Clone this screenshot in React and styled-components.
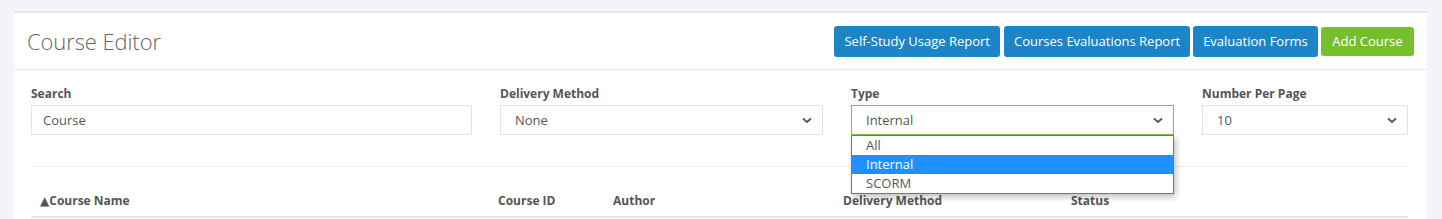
import React from "react";
import styled, { createGlobalStyle } from "styled-components";

const Global = createGlobalStyle`
  html, body { margin: 0; padding: 0; background: #f3f4f8; }
  body { font-family: "Open Sans", "Liberation Sans", sans-serif; color: #555; }
`;

const Page = styled.div`
  padding: 11px 15px 0 14px;
`;

const Card = styled.div`
  background: #fff;
  border-top: 2px solid #e4e7ea;
  height: 206px;
`;

const Header = styled.div`
  display: flex;
  align-items: center;
  justify-content: space-between;
  height: 56px;
  padding: 0 13px 0 13px;
  border-bottom: 1px solid #e8e8e8;
`;

const Title = styled.h1`
  margin: 0;
  font-size: 22px;
  font-weight: 300;
  color: #666;
  letter-spacing: -0.1px;
`;

const Actions = styled.div`
  display: flex;
  align-items: center;
  gap: 3px;
`;

const Button = styled.button`
  font-family: "Open Sans", "Liberation Sans", sans-serif;
  font-size: 13px;
  color: #fff;
  border: none;
  border-radius: 3px;
  height: ${(p) => (p.$green ? 29 : 31)}px;
  padding: 0 ${(p) => (p.$green ? 11.5 : 10)}px;
  margin-right: ${(p) => p.$mr || 0}px;
  background: ${(p) => (p.$green ? "#75bf2d" : "#1d84c6")};
  cursor: pointer;
`;

const Body = styled.div`
  padding: 16px 19px 0 17px;
`;

const Filters = styled.div`
  display: grid;
  grid-template-columns: 441px 323px 323px 206px;
  column-gap: 28px;
`;

const Field = styled.div`
  position: relative;
  display: flex;
  flex-direction: column;
`;

const Label = styled.label`
  font-size: 12px;
  font-weight: 700;
  color: #555;
  line-height: 16px;
  margin-bottom: 3px;
`;

const Input = styled.div`
  box-sizing: border-box;
  height: 30px;
  border: 1px solid ${(p) => (p.$focus ? "#79c143" : "#e3e3e3")};
  display: flex;
  align-items: center;
  justify-content: space-between;
  padding: 0 10px 0 ${(p) => p.$pad || 14}px;
  font-size: 13px;
  color: #555;
`;

const Chevron = () => (
  <svg width="10" height="7" viewBox="0 0 10 7">
    <path d="M1 1.5 L5 5 L9 1.5" fill="none" stroke="#555" strokeWidth="1.8" />
  </svg>
);

const Menu = styled.div`
  position: absolute;
  top: 49px;
  left: 0;
  right: 0;
  box-sizing: border-box;
  background: #fff;
  border: 1px solid #767676;
  box-shadow: 2px 3px 6px rgba(0, 0, 0, 0.25);
  z-index: 2;
`;

const Option = styled.div`
  height: 19px;
  line-height: 19px;
  padding-left: 14px;
  font-size: 13px;
  color: ${(p) => (p.$active ? "#fff" : "#555")};
  background: ${(p) => (p.$active ? "#1e90ff" : "#fff")};
`;

const Divider = styled.div`
  margin-top: 31px;
  border-top: 1px solid #ececec;
  width: 1377px;
`;

const TableHead = styled.div`
  display: grid;
  grid-template-columns: 458px 115px 230px 228px 346px;
  margin-top: 26px;
  border-bottom: 2px solid #e6e6e6;
  width: 1377px;
`;

const Th = styled.div`
  font-size: 12px;
  font-weight: 700;
  color: #555;
  padding: 0 9px 7px;
  line-height: 16px;
`;

const SortArrow = styled.span`
  font-family: "DejaVu Sans", sans-serif;
  font-size: 12px;
`;

export default function App() {
  return (
    <>
      <Global />
      <Page>
        <Card>
          <Header>
            <Title>Course Editor</Title>
            <Actions>
              <Button $mr={1}>Self-Study Usage Report</Button>
              <Button>Courses Evaluations Report</Button>
              <Button>Evaluation Forms</Button>
              <Button $green>Add Course</Button>
            </Actions>
          </Header>
          <Body>
            <Filters>
              <Field>
                <Label>Search</Label>
                <Input $pad={11}>Course</Input>
              </Field>
              <Field>
                <Label>Delivery Method</Label>
                <Input>
                  None
                  <Chevron />
                </Input>
              </Field>
              <Field>
                <Label>Type</Label>
                <Input $focus>
                  Internal
                  <Chevron />
                </Input>
                <Menu>
                  <Option>All</Option>
                  <Option $active>Internal</Option>
                  <Option>SCORM</Option>
                </Menu>
              </Field>
              <Field>
                <Label>Number Per Page</Label>
                <Input>
                  10
                  <Chevron />
                </Input>
              </Field>
            </Filters>
            <Divider />
            <TableHead>
              <Th>
                <SortArrow>▲</SortArrow>Course Name
              </Th>
              <Th>Course ID</Th>
              <Th>Author</Th>
              <Th>Delivery Method</Th>
              <Th>Status</Th>
            </TableHead>
          </Body>
        </Card>
      </Page>
    </>
  );
}
